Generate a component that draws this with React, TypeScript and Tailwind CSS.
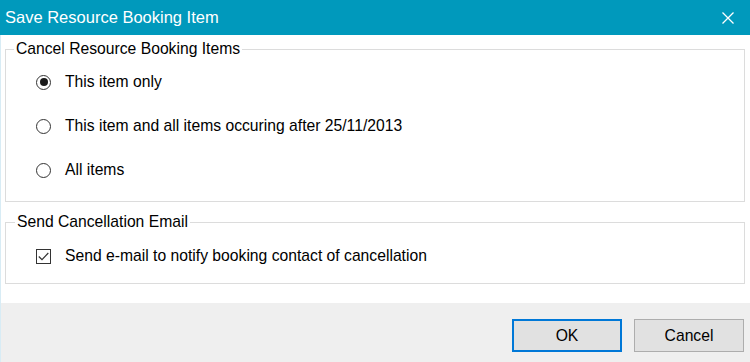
import React, { useState } from 'react'

const Radio = ({ checked, label, onClick }: { checked: boolean; label: string; onClick: () => void }) => (
    <div className="flex items-center h-[20px] cursor-pointer" onClick={onClick}>
        <span className="shrink-0 w-[15px] h-[15px] rounded-full border border-[#333333] bg-white flex items-center justify-center">
            {checked && <span className="w-[8px] h-[8px] rounded-full bg-[#1a1a1a]" />}
        </span>
        <span className="ml-[14px]">{label}</span>
    </div>
)

const App = () => {

    const [choice, setChoice] = useState(0)
    const [sendMail, setSendMail] = useState(true)

    const options = [
        'This item only',
        'This item and all items occuring after 25/11/2013',
        'All items',
    ]

    return (
        <div className="w-[750px] h-[362px] flex flex-col overflow-hidden bg-white font-['Liberation_Sans',Arial,sans-serif] text-[15.7px] text-black">
            {/* Title bar */}
            <div className="h-[35px] bg-[#0099bc] flex items-center justify-between pl-[5px] pr-[16px] text-white text-[16.5px]">
                <span>Save Resource Booking Item</span>
                <svg width="12" height="12" viewBox="0 0 12 12" className="stroke-white">
                    <path d="M0.5 0.5 L11.5 11.5 M11.5 0.5 L0.5 11.5" strokeWidth="1.3" />
                </svg>
            </div>

            <div className="flex-1 flex flex-col border-l border-[#d8ecf5]">
                {/* Form */}
                <div className="flex-1 pl-[4px] pr-[5px]">
                    <fieldset className="mt-[5px] border border-[#dcdcdc]">
                        <legend className="ml-[8px] px-[2px] leading-[18px]">Cancel Resource Booking Items</legend>
                        <div className="flex flex-col gap-[24px] pl-[30px] pt-[14px] pb-[21px]">
                            {options.map((o, i) => (
                                <Radio key={i} label={o} checked={choice === i} onClick={() => setChoice(i)} />
                            ))}
                        </div>
                    </fieldset>

                    <fieldset className="mt-[11px] border border-[#dcdcdc]">
                        <legend className="ml-[9px] px-[2px] leading-[18px]">Send Cancellation Email</legend>
                        <div className="pl-[30px] pt-[15px] pb-[17px]">
                            <div className="flex items-center h-[20px] cursor-pointer" onClick={() => setSendMail(!sendMail)}>
                                <span className="shrink-0 w-[15px] h-[15px] border border-[#333333] bg-white flex items-center justify-center">
                                    {sendMail && (
                                        <svg width="11" height="9" viewBox="0 0 11 9" fill="none" className="stroke-[#333333]">
                                            <path d="M0.8 4.5 L4 7.7 L10.3 1" strokeWidth="1.2" />
                                        </svg>
                                    )}
                                </span>
                                <span className="ml-[14px]">Send e-mail to notify booking contact of cancellation</span>
                            </div>
                        </div>
                    </fieldset>
                </div>

                {/* Footer */}
                <div className="h-[59px] bg-[#efefef] flex justify-end items-start gap-[12px] pt-[16px] pr-[6px]">
                    <button className="w-[110px] h-[33px] bg-[#e1e1e1] border-2 border-[#0078d7]">OK</button>
                    <button className="w-[110px] h-[33px] bg-[#e1e1e1] border border-[#adadad]">Cancel</button>
                </div>
            </div>
        </div>
    )
}

export default App
